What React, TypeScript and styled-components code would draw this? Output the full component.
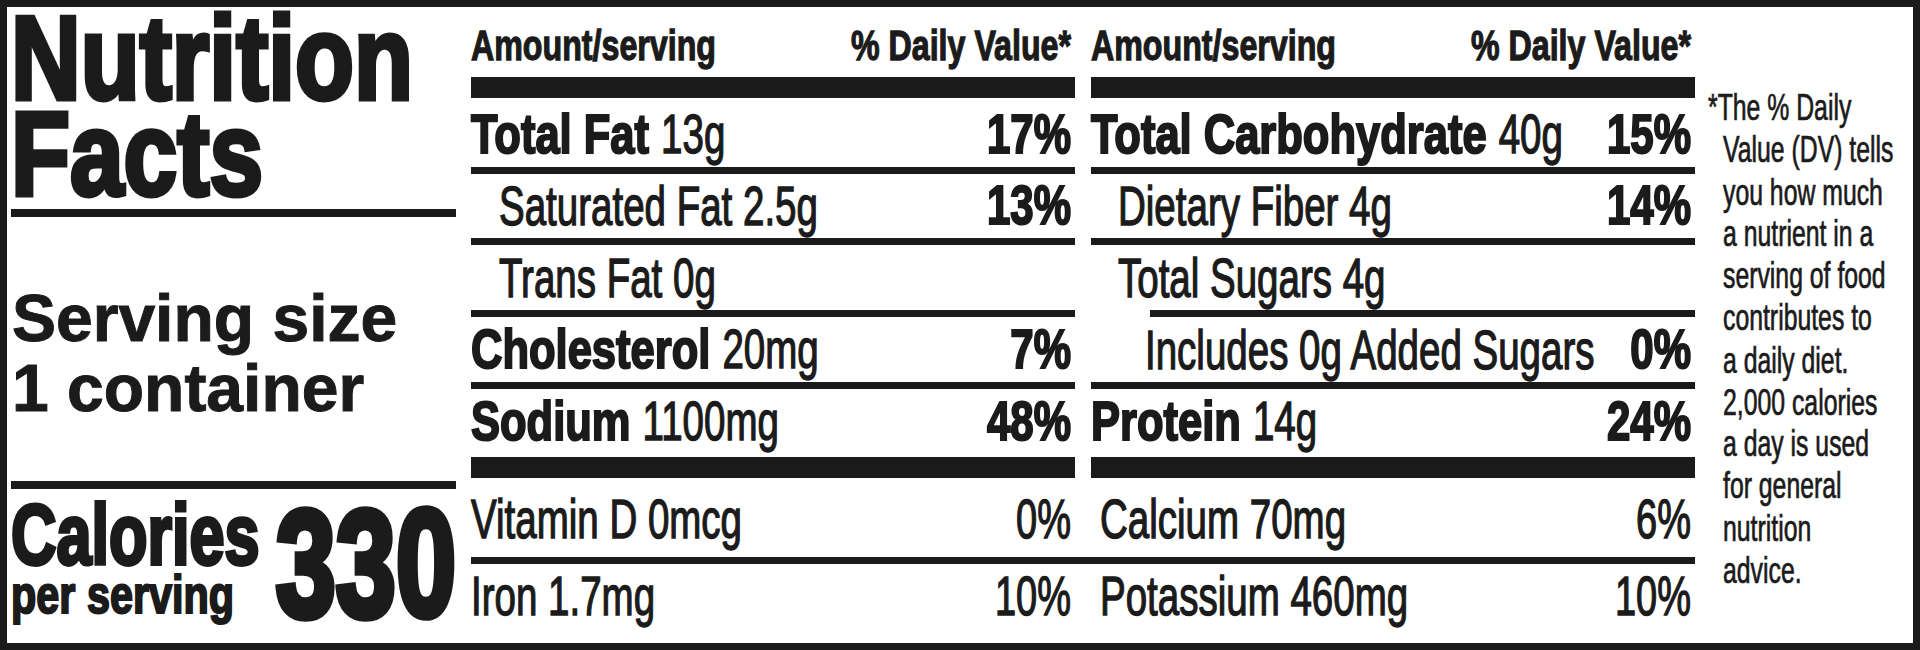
import React from 'react'
import styled, { createGlobalStyle } from 'styled-components'

const INK = '#1b1b1b'

const GlobalStyle = createGlobalStyle`
  html, body {
    margin: 0;
    padding: 0;
    background: #fff;
  }
  body {
    font-family: 'Liberation Sans', Arial, sans-serif;
    color: ${INK};
  }
`

const Panel = styled.div`
  box-sizing: border-box;
  width: 1920px;
  height: 650px;
  border: 7px solid ${INK};
  padding-left: 4px;
  display: flex;
  background: #fff;
  overflow: hidden;
`

// condensed type: font-size gives the width, scaleY gives back the cap height
const Tall = styled.span<{ $size: number; $sy: number; $bold?: boolean; $stroke?: number }>`
  display: inline-block;
  white-space: pre;
  font-size: ${p => p.$size}px;
  line-height: 1;
  font-weight: ${p => (p.$bold ? 700 : 400)};
  -webkit-text-stroke: ${p => p.$stroke ?? (p.$bold ? 0.038 : 0.025)}em ${INK};
  transform: scaleY(${p => p.$sy});
  transform-origin: 0 0.8465em;
`

const Side = styled.div`
  flex: none;
  width: 445px;
  margin-right: 15px;
  display: flex;
  flex-direction: column;
`

const TitleBox = styled.div`
  box-sizing: border-box;
  height: 202px;
  padding-top: 3px;
`

const Title = styled.h1`
  margin: 0;
  font-size: 96.5px;
  line-height: 78.2px;
  font-weight: 700;
  white-space: nowrap;
  -webkit-text-stroke: 0.042em ${INK};
  transform: scaleY(1.235);
  transform-origin: 0 0;
`

const Rule = styled.div<{ $h: number; $inset?: number }>`
  flex: none;
  height: ${p => p.$h}px;
  margin-left: ${p => p.$inset ?? 0}px;
  background: ${INK};
`

const Serving = styled.div`
  box-sizing: border-box;
  height: 264px;
  padding: 66px 0 0 1px;
  font-size: 66px;
  line-height: 70px;
  font-weight: 700;
  white-space: nowrap;
  -webkit-text-stroke: 0.015em ${INK};
`

const CaloriesBox = styled.div`
  flex: 1;
  display: flex;
  justify-content: space-between;
  align-items: flex-start;
`

const CaloriesText = styled.div`
  display: flex;
  flex-direction: column;
  align-items: flex-start;
  padding-top: 22px;
`

const PerServing = styled(Tall)`
  margin-top: 5px;
`

const CalorieCount = styled(Tall)`
  margin-top: 36px;
`

const Facts = styled.div`
  flex: none;
  width: 1224px;
  display: flex;
  flex-direction: column;
`

const Columns = styled.div`
  display: grid;
  grid-template-columns: 604px 604px;
  column-gap: 16px;
`

const Column = styled.div`
  display: flex;
  flex-direction: column;
`

const Head = styled.div`
  box-sizing: border-box;
  height: 70px;
  display: flex;
  justify-content: space-between;
  align-items: flex-end;
  padding: 0 4px 12px 0;
`

const Row = styled.div<{ $h: number; $pb: number; $indent?: number }>`
  box-sizing: border-box;
  flex: none;
  height: ${p => p.$h}px;
  display: flex;
  justify-content: space-between;
  align-items: flex-end;
  padding: 0 4px ${p => p.$pb}px ${p => p.$indent ?? 0}px;
`

const Name = styled.div`
  display: flex;
  align-items: baseline;
  min-width: 0;
`

const Minerals = styled.div`
  display: grid;
  grid-template-columns: 604px 604px;
  column-gap: 16px;
`

const Note = styled.div`
  flex: 1;
  margin-left: 13px;
  padding-top: 81px;
`

const NoteText = styled.p`
  margin: 0;
  font-size: 24.8px;
  line-height: 28.8px;
  padding-left: 15px;
  text-indent: -15px;
  white-space: nowrap;
  -webkit-text-stroke: 0.02em ${INK};
  transform: scaleY(1.46);
  transform-origin: 0 0;
`

interface INutrient {
  name: string
  amount?: string
  dv?: string
  bold?: boolean
  dvBold?: boolean
  indent?: number
  h: number
  pb: number
  ruleInset?: number
}

const leftRows: INutrient[] = [
  { name: 'Total Fat', amount: '13g', dv: '17%', bold: true, h: 69, pb: 7 },
  { name: 'Saturated Fat 2.5g', dv: '13%', dvBold: true, indent: 28, h: 64, pb: 7 },
  { name: 'Trans Fat 0g', indent: 28, h: 65, pb: 7 },
  { name: 'Cholesterol', amount: '20mg', dv: '7%', bold: true, h: 65, pb: 7 },
  { name: 'Sodium', amount: '1100mg', dv: '48%', bold: true, h: 68, pb: 10 },
]

const rightRows: INutrient[] = [
  { name: 'Total Carbohydrate', amount: '40g', dv: '15%', bold: true, h: 69, pb: 7 },
  { name: 'Dietary Fiber 4g', dv: '14%', dvBold: true, indent: 27, h: 64, pb: 7 },
  { name: 'Total Sugars 4g', indent: 27, h: 65, pb: 7, ruleInset: 59 },
  { name: 'Includes 0g Added Sugars', dv: '0%', dvBold: true, indent: 54, h: 65, pb: 7 },
  { name: 'Protein', amount: '14g', dv: '24%', bold: true, h: 68, pb: 10 },
]

const mineralRows = [
  { h: 79, pb: 13, cells: [{ name: 'Vitamin D 0mcg', dv: '0%' }, { name: 'Calcium 70mg', dv: '6%' }] },
  { h: 79, pb: 22, cells: [{ name: 'Iron 1.7mg', dv: '10%' }, { name: 'Potassium 460mg', dv: '10%' }] },
]

const footnote = [
  '*The % Daily',
  'Value (DV) tells',
  'you how much',
  'a nutrient in a',
  'serving of food',
  'contributes to',
  'a daily diet.',
  '2,000 calories',
  'a day is used',
  'for general',
  'nutrition',
  'advice.',
]

const Bold = ({ children }: { children: string }) => (
  <Tall $size={43.5} $sy={1.284} $bold>{children}</Tall>
)

const Plain = ({ children }: { children: string }) => (
  <Tall $size={38.5} $sy={1.451}>{children}</Tall>
)

const Percent = ({ value, bold }: { value: string; bold?: boolean }) =>
  bold
    ? <Tall $size={42} $sy={1.33} $bold>{value}</Tall>
    : <Tall $size={38} $sy={1.47}>{value}</Tall>

const NutrientColumn = ({ rows }: { rows: INutrient[] }) => (
  <Column>
    <Head>
      <Tall $size={32.2} $sy={1.3} $bold $stroke={0.03}>Amount/serving</Tall>
      <Tall $size={32.2} $sy={1.3} $bold $stroke={0.03}>% Daily Value*</Tall>
    </Head>
    <Rule $h={21} />
    { rows.map((row, index) => (
      <React.Fragment key={row.name}>
        <Row $h={row.h} $pb={row.pb} $indent={row.indent}>
          <Name>
            { row.bold ? <Bold>{`${row.name} `}</Bold> : <Plain>{row.name}</Plain> }
            { row.amount && <Plain>{row.amount}</Plain> }
          </Name>
          { row.dv && <Percent value={row.dv} bold={row.bold || row.dvBold} /> }
        </Row>
        { index < rows.length - 1 && <Rule $h={7} $inset={row.ruleInset} /> }
      </React.Fragment>
    ))}
    <Rule $h={21} />
  </Column>
)

const App = () => {
  return (
    <>
      <GlobalStyle />
      <Panel>
        <Side>
          <TitleBox>
            <Title>Nutrition<br />Facts</Title>
          </TitleBox>
          <Rule $h={8} />
          <Serving>Serving size<br />1 container</Serving>
          <Rule $h={8} />
          <CaloriesBox>
            <CaloriesText>
              <Tall $size={63} $sy={1.34} $bold $stroke={0.045}>Calories</Tall>
              <PerServing $size={41.4} $sy={1.3} $bold $stroke={0.04}>per serving</PerServing>
            </CaloriesText>
            <CalorieCount $size={108} $sy={1.4} $bold $stroke={0.05}>330</CalorieCount>
          </CaloriesBox>
        </Side>

        <Facts>
          <Columns>
            <NutrientColumn rows={leftRows} />
            <NutrientColumn rows={rightRows} />
          </Columns>
          { mineralRows.map((line, index) => (
            <React.Fragment key={index}>
              <Minerals>
                { line.cells.map((cell, i) => (
                  <Row key={cell.name} $h={line.h} $pb={line.pb} $indent={i === 1 ? 9 : 0}>
                    <Plain>{cell.name}</Plain>
                    <Percent value={cell.dv} />
                  </Row>
                ))}
              </Minerals>
              { index === 0 && <Rule $h={7} /> }
            </React.Fragment>
          ))}
        </Facts>

        <Note>
          <NoteText>
            { footnote.map((text, i) => (
              <React.Fragment key={text}>
                {text}{ i < footnote.length - 1 && <br /> }
              </React.Fragment>
            ))}
          </NoteText>
        </Note>
      </Panel>
    </>
  )
}

export default App
